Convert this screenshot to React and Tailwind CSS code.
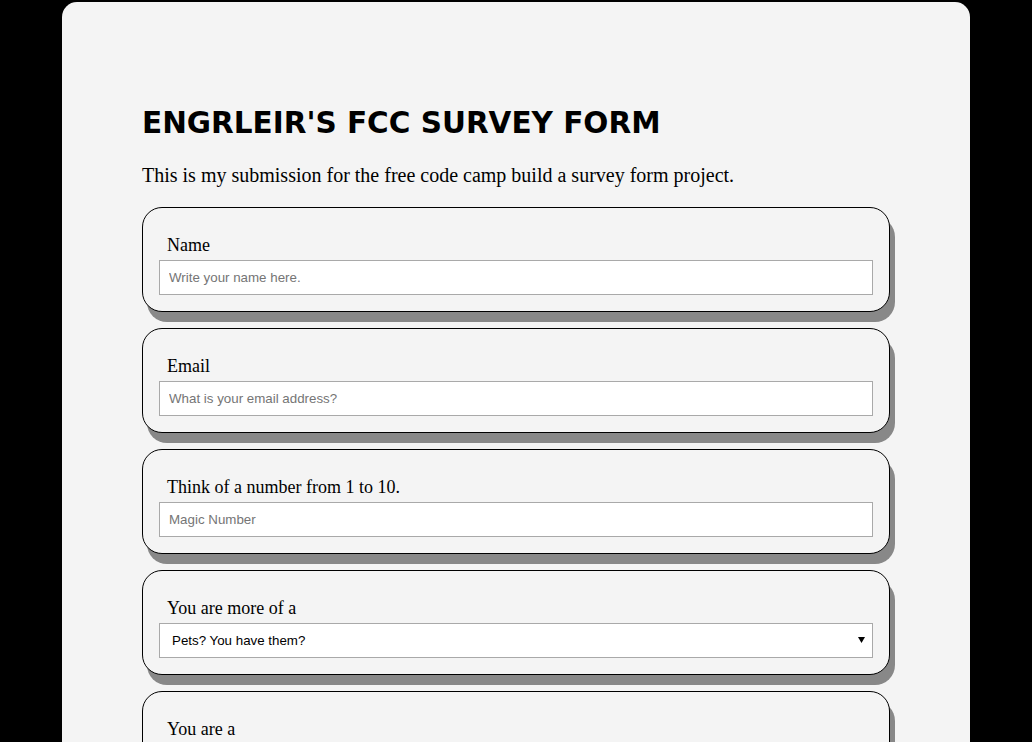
import React from "react";

function Card({ label, children }) {
  return (
    <div className="rounded-[20px] border border-black bg-[#f4f4f4] shadow-[5px_10px_0_#888] px-4 pt-[27px] pb-[16px]">
      <label className="block pl-2 text-[18px] leading-[21px] mb-[4px] text-black" style={{ fontFamily: '"Liberation Serif", serif' }}>
        {label}
      </label>
      {children}
    </div>
  );
}

function TextInput({ placeholder }) {
  return (
    <input
      type="text"
      placeholder={placeholder}
      className="block w-full h-[35px] border border-[#a9a9a9] bg-white px-[9px] text-[13.33px] text-black placeholder:text-[#757575] outline-none"
      style={{ fontFamily: '"Liberation Sans", Arial, sans-serif' }}
    />
  );
}

function Select({ value }) {
  return (
    <div className="relative">
      <div
        className="flex items-center w-full h-[35px] border border-[#a9a9a9] bg-white pl-3 text-[13.33px] text-black"
        style={{ fontFamily: '"Liberation Sans", Arial, sans-serif' }}
      >
        {value}
      </div>
      <svg className="absolute right-[8px] top-[14px]" width="7" height="6" viewBox="0 0 7 6">
        <polygon points="0,0 7,0 3.5,6" fill="#000" />
      </svg>
    </div>
  );
}

export default function App() {
  return (
    <div className="min-h-screen bg-black pt-[2px]">
      <div className="mx-auto w-[908px] rounded-t-[15px] bg-[#f4f4f4] px-20 pt-[101px] pb-20">
        <h1
          className="text-[29.5px] leading-[40px] font-bold text-black"
          style={{ fontFamily: '"DejaVu Sans", sans-serif' }}
        >
          ENGRLEIR'S FCC SURVEY FORM
        </h1>
        <p className="mt-[20px] mb-[20px] text-[20px] leading-[24px] text-black" style={{ fontFamily: '"Liberation Serif", serif' }}>
          This is my submission for the free code camp build a survey form project.
        </p>
        <div className="flex flex-col gap-4">
          <Card label="Name">
            <TextInput placeholder="Write your name here." />
          </Card>
          <Card label="Email">
            <TextInput placeholder="What is your email address?" />
          </Card>
          <Card label="Think of a number from 1 to 10.">
            <TextInput placeholder="Magic Number" />
          </Card>
          <Card label="You are more of a">
            <Select value="Pets? You have them?" />
          </Card>
          <Card label="You are a">
            <Select value="Student" />
          </Card>
        </div>
      </div>
    </div>
  );
}
